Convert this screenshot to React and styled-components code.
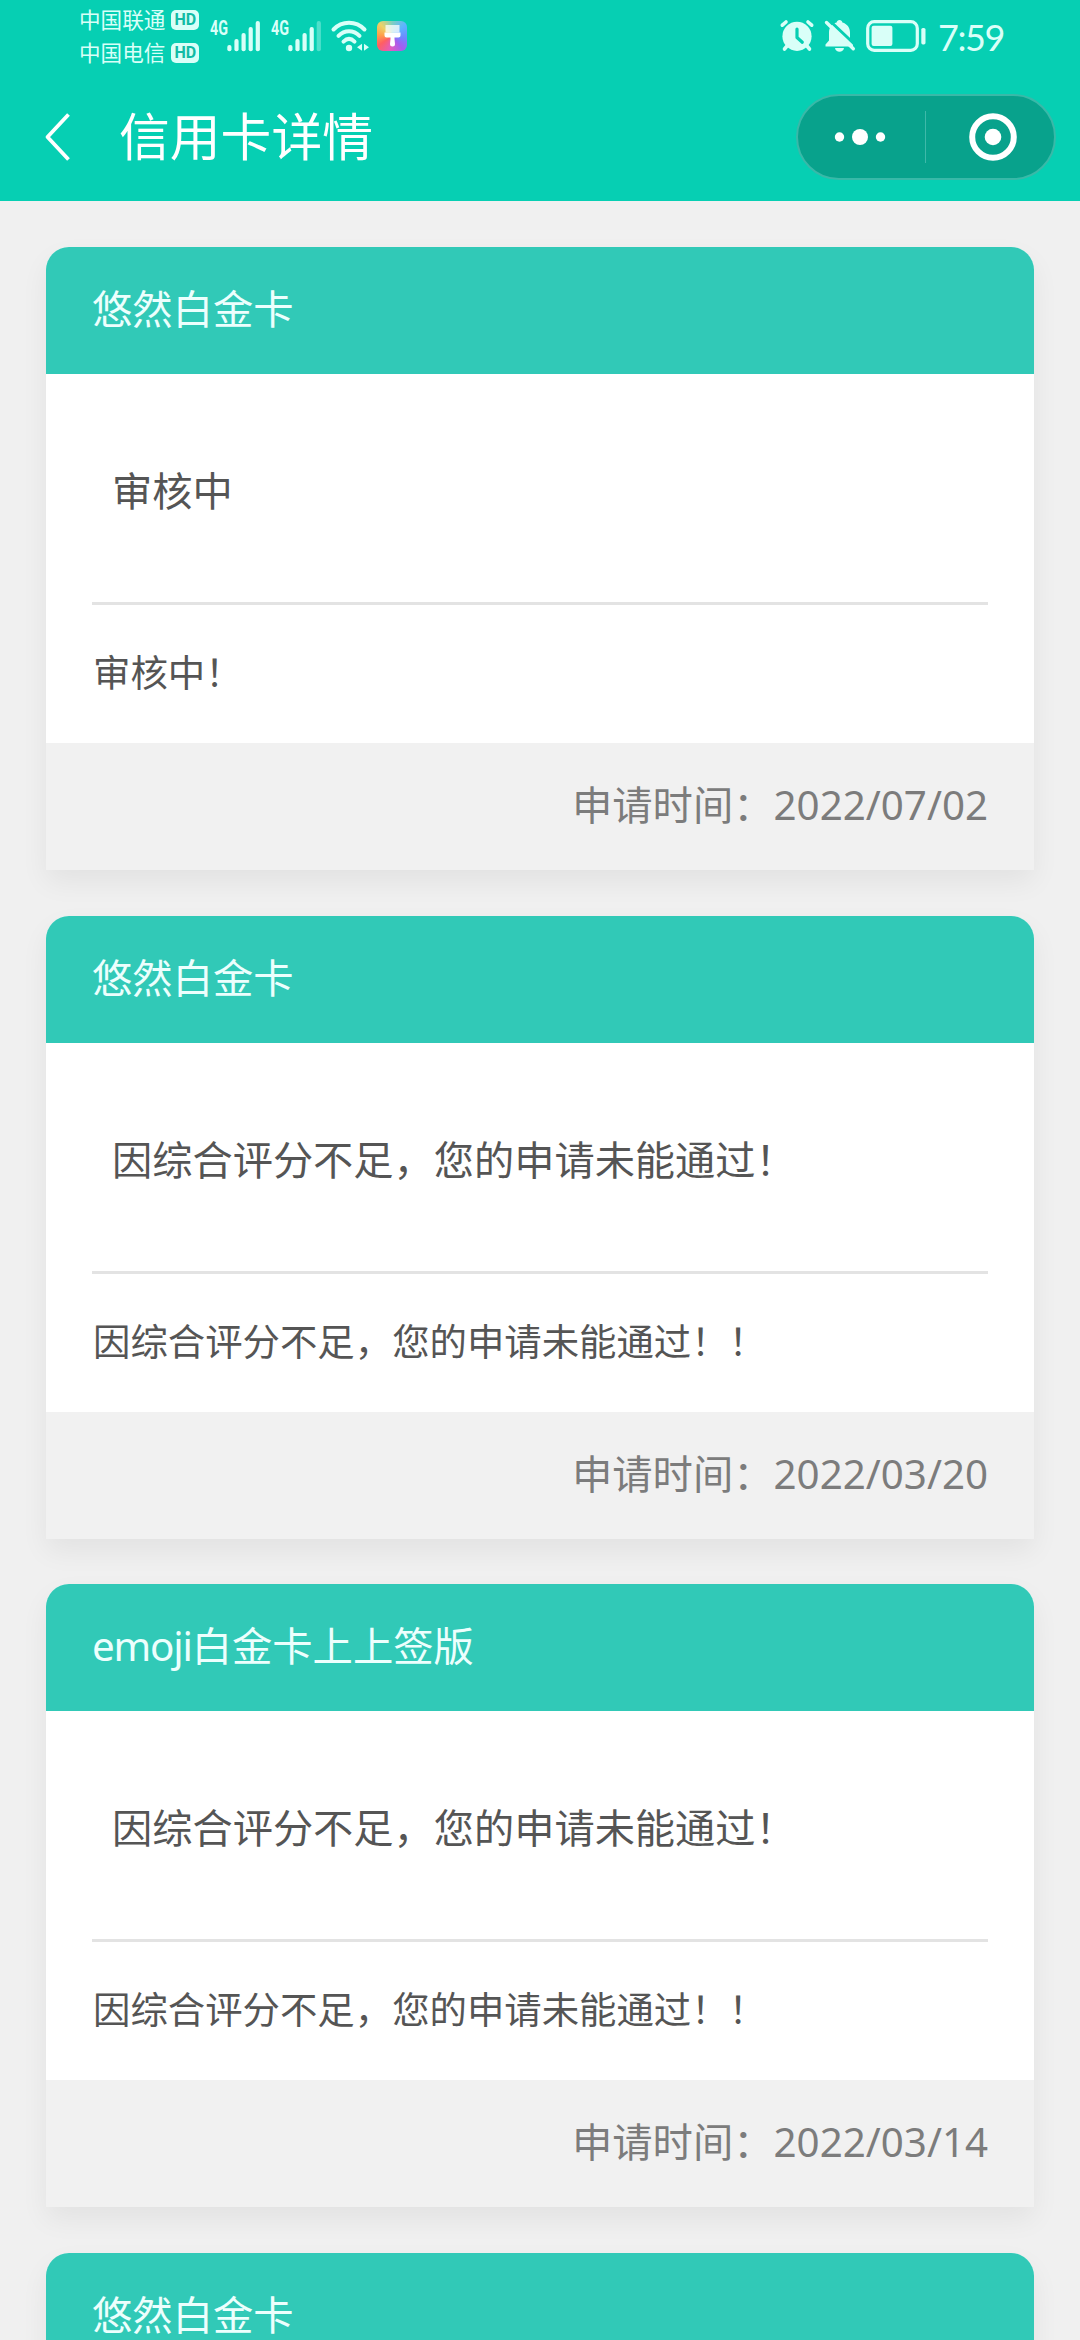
import React from 'react';
import styled, { createGlobalStyle } from 'styled-components';

const Global = createGlobalStyle`
  * { box-sizing: border-box; }
  html, body { margin: 0; padding: 0; background: #f0f0f0; }
  body { font-family: "Noto Sans", "Noto Sans CJK SC", sans-serif; }
`;

const Screen = styled.div`
  width: 1080px;
  height: 2340px;
  overflow: hidden;
  background: #f0f0f0;
  display: flex;
  flex-direction: column;
`;

const Top = styled.header`
  flex: none;
  height: 201px;
  background: #06cfb3;
  color: #fff;
`;

const StatusBar = styled.div`
  height: 72px;
  padding: 0 76px 0 79px;
  display: flex;
  justify-content: space-between;
  align-items: center;
  color: #d9fff8;
`;

const StatusGroup = styled.div`
  display: flex;
  align-items: center;
`;

const Carriers = styled.div`
  display: flex;
  flex-direction: column;
  gap: 1px;
  padding-top: 1px;
  margin-right: 11px;
`;

const Carrier = styled.div`
  display: flex;
  align-items: center;
  gap: 6px;
  height: 32px;
  font-size: 21.6px;
  line-height: 32px;
  white-space: nowrap;
`;

const HdBadge = styled.span`
  width: 28px;
  height: 20px;
  border-radius: 5px;
  background: #d9fff8;
  color: #12bba5;
  font: 700 16px/20px Roboto, sans-serif;
  text-align: center;
`;

const Glyph = styled.svg`
  flex: none;
  display: block;
  overflow: visible;
  margin-right: ${(p) => p.$gap || 0}px;
`;

const Clock = styled.span`
  font: 400 36px/72px Lato, sans-serif;
  letter-spacing: -1.4px;
  width: 66px;
  padding-top: 2px;
  white-space: nowrap;
`;

const NavBar = styled.div`
  height: 129px;
  padding: 1px 24px 0 45px;
  display: flex;
  align-items: center;
`;

const NavTitle = styled.h1`
  flex: 1;
  margin: 0 0 0 48px;
  font-size: 50.8px;
  line-height: 70px;
  font-weight: 400;
  white-space: nowrap;
`;

const Capsule = styled.div`
  width: 260px;
  height: 86px;
  border: 2px solid #39b9a8;
  border-radius: 43px;
  background: #08a28c;
  display: flex;
  align-items: center;
`;

const CapsuleButton = styled.button`
  width: ${(p) => p.$width}px;
  height: 52px;
  padding: ${(p) => p.$pad};
  border: 0;
  border-left: ${(p) => (p.$divided ? '1px solid #3fb9a9' : '0')};
  background: none;
  display: flex;
  align-items: center;
  justify-content: center;
`;

const CardList = styled.main`
  padding: 46px 46px 0;
  display: flex;
  flex-direction: column;
  gap: 45.67px;
`;

const Card = styled.section`
  flex: none;
  height: 623px;
  border-radius: 23px 23px 0 0;
  background: #fff;
  box-shadow: 0 12px 28px rgba(0, 0, 0, 0.06);
  display: flex;
  flex-direction: column;
`;

const CardHeader = styled.div`
  height: 127px;
  padding: 34px 46px 0;
  border-radius: 23px 23px 0 0;
  background: #31c9b7;
  color: #ecfffd;
  font-size: 40.32px;
  line-height: 56px;
  white-space: nowrap;
`;

const LatinRun = styled.span`
  letter-spacing: -1.2px;
`;

const CardBody = styled.div`
  flex: 1;
  padding: 0 46px;
  display: flex;
  flex-direction: column;
  color: #555;
`;

const Message = styled.p`
  height: 231px;
  margin: 0;
  padding-left: 20px;
  border-bottom: 3px solid #e3e3e3;
  font-size: 40.22px;
  line-height: 233px;
  white-space: nowrap;
`;

const Note = styled.p`
  margin: 0;
  font-size: 37.4px;
  line-height: 135px;
  padding-left: 1px;
  white-space: nowrap;
`;

const CardFooter = styled.div`
  height: 127px;
  padding: 0 46px;
  background: #f1f1f1;
  color: #7c7c7c;
  font-size: 40.32px;
  line-height: 124px;
  text-align: right;
  white-space: nowrap;
`;

const CARDS = [
  { name: '悠然白金卡', message: '审核中', note: '审核中！', date: '2022/07/02' },
  { name: '悠然白金卡', message: '因综合评分不足，您的申请未能通过！', note: '因综合评分不足，您的申请未能通过！！', date: '2022/03/20' },
  { latin: 'emoji', name: '白金卡上上签版', message: '因综合评分不足，您的申请未能通过！', note: '因综合评分不足，您的申请未能通过！！', date: '2022/03/14' },
  { name: '悠然白金卡' },
];

const BARS = [0, 1, 2, 3, 4];

function Signal({ weak, gap }) {
  return (
    <Glyph width="51" height="32" viewBox="0 0 51 32" fill="currentColor" $gap={gap}>
      <text x="0" y="15" fontFamily="Roboto, sans-serif" fontWeight="700" fontSize="19.5" textLength="18" lengthAdjust="spacingAndGlyphs">4G</text>
      {BARS.map((i) => (
        <rect key={i} x={17.3 + i * 7.1} y={25 - i * 6} width="4.2" height={6.2 + i * 6} rx="2" opacity={weak && i === 4 ? 0.35 : 1} />
      ))}
    </Glyph>
  );
}

function Wifi() {
  return (
    <Glyph width="38" height="32" viewBox="0 0 38 32" fill="none" stroke="currentColor" strokeWidth="4" strokeLinecap="round" $gap={8}>
      <path d="M2.5 9.5 C11 0.6 25 0.6 33.5 9.5" />
      <path d="M7.5 15.8 C13.5 9.6 22.5 9.6 28.5 15.8" />
      <path d="M12.5 21.6 C16 18.2 20 18.2 23.5 21.6" />
      <circle cx="18" cy="28" r="3.2" fill="currentColor" stroke="none" />
      <path d="M31 23.8 V30.8 L26 27.3 Z M33 23.8 V30.8 L38 27.3 Z" fill="currentColor" stroke="none" />
    </Glyph>
  );
}

const ThemeApp = styled.span`
  width: 30px;
  height: 30px;
  border-radius: 6px;
  background: conic-gradient(from 0deg, #7fcfc0, #5bb4ff 50deg, #6f86ff 100deg, #a45df0 140deg, #e25cc0 185deg, #ff5f62 235deg, #ffa04a 275deg, #ecd268 315deg, #7fcfc0);
  display: flex;
  align-items: center;
  justify-content: center;
`;

function BrushIcon() {
  return (
    <Glyph width="17" height="22" viewBox="0 0 17 22" fill="#fff">
      <path d="M1.5 0 H15.5 V7.5 H1.5 Z" opacity="0.75" />
      <path d="M0.5 7.5 H16.5 V10.5 Q16.5 12.5 14.5 12.5 H10.5 V14 L11 19 Q11 21.5 8.5 21.5 Q6 21.5 6 19 L6.5 14 V12.5 H2.5 Q0.5 12.5 0.5 10.5 Z" />
    </Glyph>
  );
}

function AlarmIcon() {
  return (
    <Glyph width="34" height="34" viewBox="0 0 34 34" fill="none" stroke="currentColor" strokeLinecap="round" $gap={10}>
      <circle cx="17" cy="17.3" r="14.6" fill="currentColor" stroke="none" />
      <path d="M2.3 6.2 L6 3 M31.7 6.2 L28 3" strokeWidth="3.6" />
      <path d="M7 27 L4.5 30 M27 27 L29.5 30" strokeWidth="3.6" />
      <path d="M17 10 V18.5 L22.3 23.2" stroke="#06cfb3" strokeWidth="3.2" strokeLinejoin="round" />
    </Glyph>
  );
}

function BellOffIcon() {
  return (
    <Glyph width="32" height="34" viewBox="0 0 32 34" $gap={10}>
      <path d="M15.5 1 C17 1 18.2 2 18.4 3.5 C23 4.8 26 8.5 26 13.5 V21 L29 25.5 V27.5 H1.5 V25.5 L5 21.5 V13.5 C5 8.5 8 4.8 12.6 3.5 C12.9 2 14 1 15.5 1 Z" fill="currentColor" />
      <path d="M11 29 H20 C19.5 31.5 17.8 32.8 15.5 32.8 C13.2 32.8 11.5 31.5 11 29 Z" fill="currentColor" />
      <path d="M5.5 1.5 L33 27.5" stroke="#06cfb3" strokeWidth="3" />
      <path d="M2.5 3.5 L29.3 29.8" stroke="currentColor" strokeWidth="3.4" strokeLinecap="round" />
    </Glyph>
  );
}

function BatteryIcon() {
  return (
    <Glyph width="60" height="32" viewBox="0 0 60 32" fill="currentColor" $gap={12}>
      <rect x="1.7" y="1.7" width="49.6" height="28.6" rx="6.5" fill="none" stroke="currentColor" strokeWidth="3.2" />
      <rect x="5.6" y="5.8" width="20.8" height="20.2" rx="2" />
      <rect x="55.3" y="8" width="4.2" height="16.4" rx="1.6" />
    </Glyph>
  );
}

export default function App() {
  return (
    <Screen>
      <Global />
      <Top>
        <StatusBar>
          <StatusGroup>
            <Carriers>
              <Carrier>中国联通<HdBadge>HD</HdBadge></Carrier>
              <Carrier>中国电信<HdBadge>HD</HdBadge></Carrier>
            </Carriers>
            <Signal gap={10} />
            <Signal gap={9} weak />
            <Wifi />
            <ThemeApp><BrushIcon /></ThemeApp>
          </StatusGroup>
          <StatusGroup>
            <AlarmIcon />
            <BellOffIcon />
            <BatteryIcon />
            <Clock>7:59</Clock>
          </StatusGroup>
        </StatusBar>
        <NavBar>
          <Glyph width="26" height="48" viewBox="0 0 26 48" fill="none" stroke="#fff" strokeWidth="3.8">
            <path d="M23.5 1.5 L2.5 24 L23.5 46.5" strokeLinejoin="round" />
          </Glyph>
          <NavTitle>信用卡详情</NavTitle>
          <Capsule>
            <CapsuleButton $width={127} $pad="0 3px 0 0">
              <Glyph width="52" height="18" viewBox="0 0 52 18" fill="#fff">
                <circle cx="5.5" cy="9" r="4.7" />
                <circle cx="26" cy="9" r="8" />
                <circle cx="46.5" cy="9" r="4.7" />
              </Glyph>
            </CapsuleButton>
            <CapsuleButton $divided $width={129} $pad="0 0 0 5px">
              <Glyph width="50" height="50" viewBox="0 0 50 50" fill="none">
                <circle cx="25" cy="25" r="20.8" stroke="#fff" strokeWidth="6" />
                <circle cx="25" cy="25" r="8.3" fill="#fff" />
              </Glyph>
            </CapsuleButton>
          </Capsule>
        </NavBar>
      </Top>
      <CardList>
        {CARDS.map((card, i) => (
          <Card key={i}>
            <CardHeader>
              {card.latin && <LatinRun>{card.latin}</LatinRun>}
              {card.name}
            </CardHeader>
            {card.message && (
              <>
                <CardBody>
                  <Message>{card.message}</Message>
                  <Note>{card.note}</Note>
                </CardBody>
                <CardFooter>申请时间：{card.date}</CardFooter>
              </>
            )}
          </Card>
        ))}
      </CardList>
    </Screen>
  );
}
